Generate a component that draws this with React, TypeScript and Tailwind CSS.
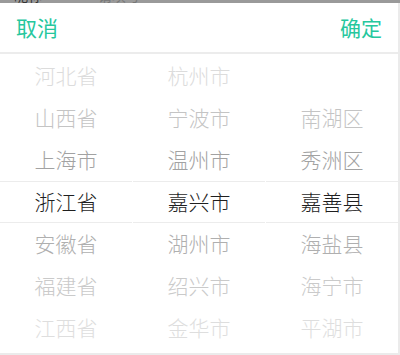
import React from "react";

const provinces = ["河北省", "山西省", "上海市", "浙江省", "安徽省", "福建省", "江西省"];
const cities = ["杭州市", "宁波市", "温州市", "嘉兴市", "湖州市", "绍兴市", "金华市"];
const counties = ["", "南湖区", "秀洲区", "嘉善县", "海盐县", "海宁市", "平湖市"];

// text colour per row, fading away from the selected middle row
const rowColors = [
  "text-[#dcdcdc]",
  "text-[#c4c4c4]",
  "text-[#a2a2a2]",
  "text-[#1f1f1f]",
  "text-[#afafaf]",
  "text-[#cacaca]",
  "text-[#dedede]",
];

function Column({ items, last }: { items: string[]; last?: boolean }) {
  return (
    <div className={`flex-1 flex flex-col ${last ? "" : "mr-px"}`}>
      {items.map((item, idx) => (
        <div
          key={idx}
          className={`h-[42px] flex items-center justify-center text-[21px] font-light ${rowColors[idx]} ${
            idx === 3 ? "border-y border-[#ececec]" : ""
          }`}
        >
          {item}
        </div>
      ))}
    </div>
  );
}

export default function App() {
  return (
    <div
      className="w-[400px] h-[355px] bg-white overflow-hidden flex flex-col"
      style={{ fontFamily: '"Noto Sans CJK SC", "Noto Sans", sans-serif' }}
    >
      {/* dimmed page behind the sheet */}
      <div className="h-[3px] bg-[#9a9a9a] overflow-hidden shrink-0">
        <div className="-mt-[12px] flex items-center justify-between pl-[14px] text-[14px] text-[#333] leading-[14px]">
          <div className="flex gap-[56px]">
            <span>昵称</span>
            <span className="text-[#777]">请填写</span>
          </div>
          <span className="text-[#777] mr-[22px]">›</span>
        </div>
      </div>

      <div className="flex-1 flex flex-col border-r-2 border-b-2 border-[#ebebeb]">
        <div className="h-[51px] shrink-0 flex items-center justify-between px-[16px] border-b-2 border-[#ececec] text-[21px] text-[#26c79d]">
          <span>取消</span>
          <span>确定</span>
        </div>
        <div className="flex pt-[1px]">
          <Column items={provinces} />
          <Column items={cities} />
          <Column items={counties} last />
        </div>
      </div>
    </div>
  );
}
